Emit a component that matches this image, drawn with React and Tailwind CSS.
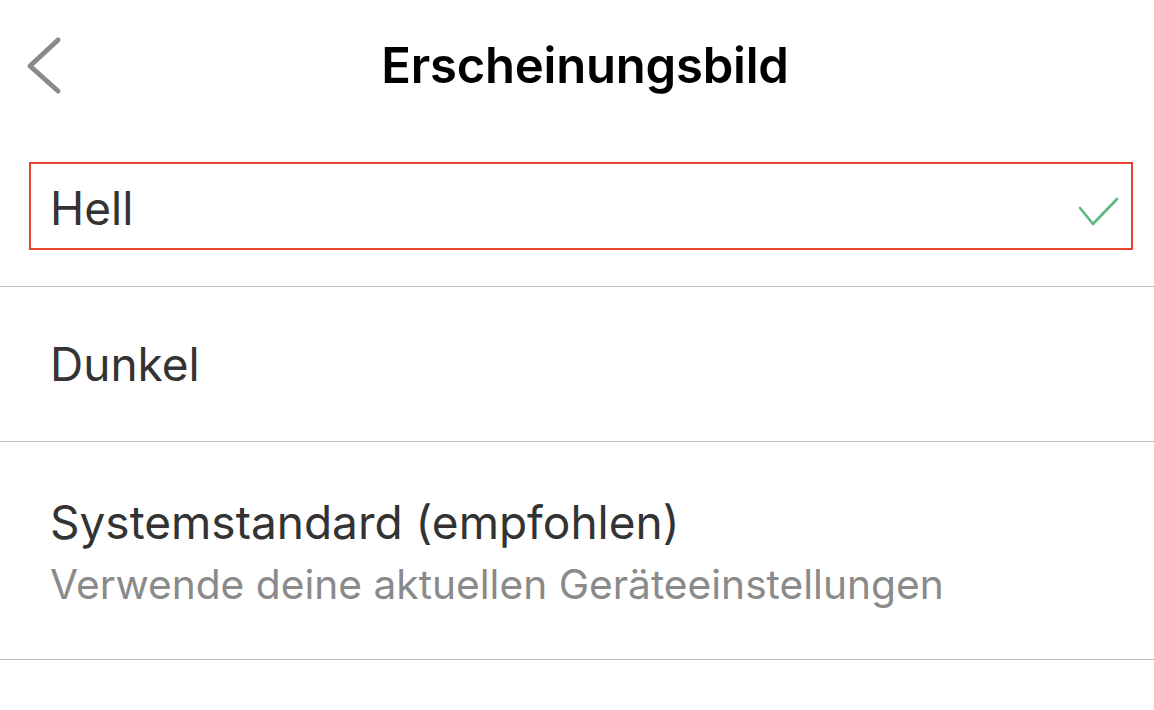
import React from 'react';

const font = { fontFamily: 'Inter, "Noto Sans", sans-serif' };

function BackIcon() {
  return (
    <svg width="44" height="70" viewBox="0 0 44 70" className="block">
      <path d="M33 11 L5 37 L33 62" fill="none" stroke="#8a8a8a" strokeWidth="5" strokeLinecap="round" strokeLinejoin="round" />
    </svg>
  );
}

function CheckIcon() {
  return (
    <svg width="44" height="36" viewBox="0 0 44 36" className="block">
      <path d="M3 13 L16 29 L40 4" fill="none" stroke="#5cb87f" strokeWidth="2.6" strokeLinecap="round" strokeLinejoin="round" />
    </svg>
  );
}

export default function App() {
  return (
    <div className="w-[1154px] h-[710px] bg-white overflow-hidden" style={font}>
      <header className="h-[128px] grid grid-cols-[1fr_auto_1fr] items-center">
        <div className="pl-[25px]">
          <BackIcon />
        </div>
        <h1 className="text-[49px] font-semibold text-black tracking-[-0.2px] pt-[3px] pl-[16px]">Erscheinungsbild</h1>
        <div />
      </header>

      <div className="pl-[29px] pr-[21px] pt-[34px] pb-[36px] border-b border-[#bcbcbc]">
        <div className="h-[88px] border-2 border-[#e8432c] flex items-center justify-between pl-[19px] pr-[10px]">
          <span className="text-[46px] leading-[56px] text-[#333333] pt-[3px]">Hell</span>
          <div className="mt-[13px]">
            <CheckIcon />
          </div>
        </div>
      </div>

      <div className="h-[155px] flex items-center pl-[50px] border-b border-[#bcbcbc]">
        <span className="text-[46px] leading-[56px] text-[#333333]">Dunkel</span>
      </div>

      <div className="h-[218px] flex flex-col justify-center pl-[50px] pt-[4px] border-b border-[#bcbcbc] gap-[13px]">
        <span className="text-[46px] leading-[52px] text-[#333333]">Systemstandard (empfohlen)</span>
        <span className="text-[40.7px] leading-[48px] text-[#8a8a8a]">Verwende deine aktuellen Geräteeinstellungen</span>
      </div>
    </div>
  );
}
